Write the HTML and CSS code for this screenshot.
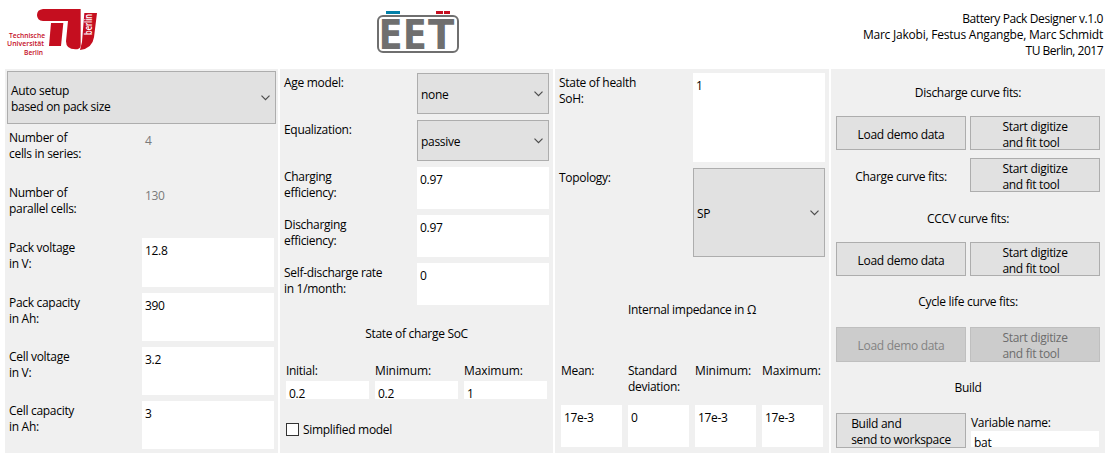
FILE: index.html
```html
<!DOCTYPE html>
<html lang="en">
<head>
<meta charset="utf-8">
<title>Battery Pack Designer</title>
<link rel="stylesheet" href="styles.css">
</head>
<body>
<header class="header">
  <svg class="logo-tu" width="120" height="66" viewBox="0 0 120 66">
    <g transform="scale(.33333)" fill="#c50e1f">
      <path d="M129 27H242V138Q240 148 226 148Q198 148 198 124L204 63H129Q111 61 111 45Q111 29 129 27Z"/>
      <path d="M153 69H190L183 138H147Z"/>
      <path d="M253 39H291L282 112Q277 146 240 150L246 126Z"/>
    </g>
    <g class="logo-tu-text" fill="#c50e1f">
      <text x="9" y="38" textLength="36" lengthAdjust="spacingAndGlyphs">Technische</text>
      <text x="7" y="46" textLength="37" lengthAdjust="spacingAndGlyphs">Universität</text>
      <text x="24" y="55" textLength="19" lengthAdjust="spacingAndGlyphs">Berlin</text>
    </g>
    <text class="logo-tu-berlin" transform="translate(92 35) rotate(-90)" textLength="21" lengthAdjust="spacingAndGlyphs">berlin</text>
  </svg>
  <svg class="logo-eet" width="104" height="64" viewBox="0 0 104 64">
    <path d="M20 11h14v3H20z" fill="#007fa8"/>
    <path d="M70 11h7v3h-7zM78 11h6v3h-6z" fill="#c50e1f"/>
    <rect x="12" y="16" width="80" height="36" rx="5" fill="none" stroke="#6f6f6f" stroke-width="2"/>
    <g class="logo-eet-text" fill="#6f6f6f">
      <text transform="translate(12.8 49) scale(.85 1)">E</text>
      <text transform="translate(37 49) scale(.85 1)">E</text>
      <text transform="translate(62 49) scale(.94 1)">T</text>
    </g>
  </svg>
  <div class="credits">
    <div class="app-name">Battery Pack Designer v.1.0</div>
    <div class="authors">Marc Jakobi, Festus Angangbe, Marc Schmidt</div>
    <div class="place">TU Berlin, 2017</div>
  </div>
</header>

<main class="panels">
  <section class="panel pack">
    <div class="popup">Auto setup<br>based on pack size<svg class="chev" viewBox="0 0 9 6"><path d="M.5 .7L4.5 4.7L8.5 .7"/></svg></div>
    <div class="rows">
      <div class="label">Number of<br>cells in series:</div><div class="field off">4</div>
      <div class="label">Number of<br>parallel cells:</div><div class="field off">130</div>
      <div class="label">Pack voltage<br>in V:</div><div class="field">12.8</div>
      <div class="label">Pack capacity<br>in Ah:</div><div class="field">390</div>
      <div class="label">Cell voltage<br>in V:</div><div class="field">3.2</div>
      <div class="label">Cell capacity<br>in Ah:</div><div class="field">3</div>
    </div>
  </section>

  <section class="panel params">
    <div class="rows">
      <div class="label">Age model:</div>
      <div class="popup">none<svg class="chev" viewBox="0 0 9 6"><path d="M.5 .7L4.5 4.7L8.5 .7"/></svg></div>
      <div class="label">Equalization:</div>
      <div class="popup">passive<svg class="chev" viewBox="0 0 9 6"><path d="M.5 .7L4.5 4.7L8.5 .7"/></svg></div>
      <div class="label">Charging<br>efficiency:</div><div class="field">0.97</div>
      <div class="label">Discharging<br>efficiency:</div><div class="field">0.97</div>
      <div class="label">Self-discharge rate<br>in 1/month:</div><div class="field">0</div>
    </div>
    <div class="title soc-title">State of charge SoC</div>
    <div class="soc">
      <div>Initial:<div class="field">0.2</div></div>
      <div><span class="limit">Minimum:</span><div class="field">0.2</div></div>
      <div><span class="limit">Maximum:</span><div class="field">1</div></div>
    </div>
    <div class="check"><span class="box"></span><span class="check-text">Simplified model</span></div>
  </section>

  <section class="panel health">
    <div class="rows">
      <div class="label">State of health<br>SoH:</div><div class="field">1</div>
      <div class="label">Topology:</div>
      <div class="popup">SP<svg class="chev" viewBox="0 0 9 6"><path d="M.5 .7L4.5 4.7L8.5 .7"/></svg></div>
    </div>
    <div class="title imp-title">Internal impedance in Ω</div>
    <div class="imp">
      <div>Mean:</div><div>Standard<br>deviation:</div><div class="limit">Minimum:</div><div class="limit">Maximum:</div>
      <div class="field">17e-3</div><div class="field">0</div><div class="field">17e-3</div><div class="field">17e-3</div>
    </div>
  </section>

  <section class="panel fits">
    <div class="title wide">Discharge curve fits:</div>
    <div class="btn">Load demo data</div>
    <div class="btn"><span>Start digitize<br>and fit tool</span></div>
    <div class="title charge">Charge curve fits:</div>
    <div class="btn charge-tool"><span>Start digitize<br>and fit tool</span></div>
    <div class="title wide cccv">CCCV curve fits:</div>
    <div class="btn">Load demo data</div>
    <div class="btn"><span>Start digitize<br>and fit tool</span></div>
    <div class="title wide">Cycle life curve fits:</div>
    <div class="btn tall disabled">Load demo data</div>
    <div class="btn tall disabled dark"><span>Start digitize<br>and fit tool</span></div>
    <div class="title wide">Build</div>
    <div class="btn tall"><span>Build and<br>send to workspace</span></div>
    <div class="variable">Variable name:<div class="field">bat</div></div>
  </section>
</main>
</body>
</html>
```
FILE: styles.css
```css
* { box-sizing: border-box; }
body {
  margin: 0;
  width: 1113px;
  height: 457px;
  overflow: hidden;
  background: #fff;
  color: #000;
  font: 12px/16px "Open Sans", "Noto Sans", sans-serif;
  letter-spacing: -0.3px;
  white-space: nowrap;
}
.header {
  display: flex;
  height: 69px;
  padding-right: 10px;
}
.header svg { display: block; flex: none; }
.logo-eet { margin-left: 246px; }
.logo-tu-text { font: 600 7.5px "Open Sans", sans-serif; letter-spacing: 0; }
.logo-tu-berlin { font: 600 11px "Open Sans", sans-serif; letter-spacing: 0; fill: #fff; }
.logo-eet-text {
  font: bold 41px "DejaVu Sans", sans-serif;
  letter-spacing: 0;
}
.credits {
  margin-left: auto;
  padding-top: 11px;
  text-align: right;
}
.app-name { letter-spacing: -0.4px; }
.authors { letter-spacing: -0.22px; }
.place { letter-spacing: -0.5px; }
.panels {
  display: grid;
  grid-template-columns: 273px 273px 274px 274px;
  column-gap: 2px;
  height: 384px;
  padding-left: 5px;
}
.panel { background: #f0f0f0; }
.rows { display: grid; row-gap: 6px; }
.label { padding-top: 2px; }
.limit { letter-spacing: -0.1px; }
.field {
  background: #fff;
  padding: 5px 3px 0;
}
.field.off { background: none; color: #7a7a7a; }
.popup {
  display: flex;
  align-items: center;
  justify-content: space-between;
  padding: 3px 5px 0 3px;
  background: #e1e1e1;
  border: 1px solid #adadad;
}
.chev {
  width: 9px;
  height: 6px;
  margin-bottom: 2px;
  fill: none;
  stroke: #4c4c4c;
  stroke-width: 1.2;
}
.title { text-align: center; }

.pack { padding: 2px 2px 0; }
.pack > .popup { height: 53px; padding-top: 2px; }
.pack .rows {
  margin-top: 4px;
  padding-left: 2px;
  grid-template-columns: 133px 132px;
  grid-template-rows: 49px 49px 49px 48px 48px 48px;
}

.params { padding-top: 4px; }
.params .rows {
  padding-left: 4px;
  grid-template-columns: 133px 132px;
  grid-template-rows: 41px 41px 42px 42px 42px;
}
.soc-title { margin-top: 21px; }
.soc {
  display: grid;
  grid-template-columns: repeat(3, 83px);
  column-gap: 6px;
  padding-left: 6px;
  margin-top: 21px;
}
.soc .field { height: 18px; margin-top: 2px; }
.check {
  display: flex;
  align-items: center;
  gap: 4px;
  height: 16px;
  padding-left: 6px;
  margin-top: 22px;
}
.check-text { padding-top: 2px; }
.box {
  width: 13px;
  height: 13px;
  background: #fff;
  border: 1px solid #333;
}

.health { padding-top: 4px; }
.health .rows {
  padding-left: 4px;
  grid-template-columns: 134px 132px;
  grid-template-rows: 89px 89px;
}
.imp-title { margin-top: 45px; }
.imp {
  display: grid;
  grid-template-columns: repeat(4, 61px);
  grid-template-rows: 42px 42px;
  column-gap: 6px;
  padding-left: 6px;
  margin-top: 45px;
}

.fits {
  display: grid;
  grid-template-columns: 130px 130px;
  grid-template-rows: 47px 34px 42px 50px 34px 51px 35px 51px 35px;
  column-gap: 4px;
  padding-left: 5px;
  align-items: center;
}
.fits .title { padding-top: 1px; }
.fits .charge { padding-top: 12px; }
.fits .charge-tool { height: 34px; margin-top: 8px; }
.fits .wide { grid-column: 1 / 3; }
.fits .cccv { padding-top: 4px; }
.btn {
  display: flex;
  align-items: center;
  justify-content: center;
  height: 100%;
  padding-top: 4px;
  background: #e1e1e1;
  border: 1px solid #adadad;
}
.tall { padding-top: 3px; }
.disabled { background: #ccc; border-color: #bfbfbf; color: #838383; }
.dark { color: #6d6d6d; }
.variable { align-self: start; padding: 2px 1px 0; }
.variable .field { height: 16px; padding-top: 4px; }
```
